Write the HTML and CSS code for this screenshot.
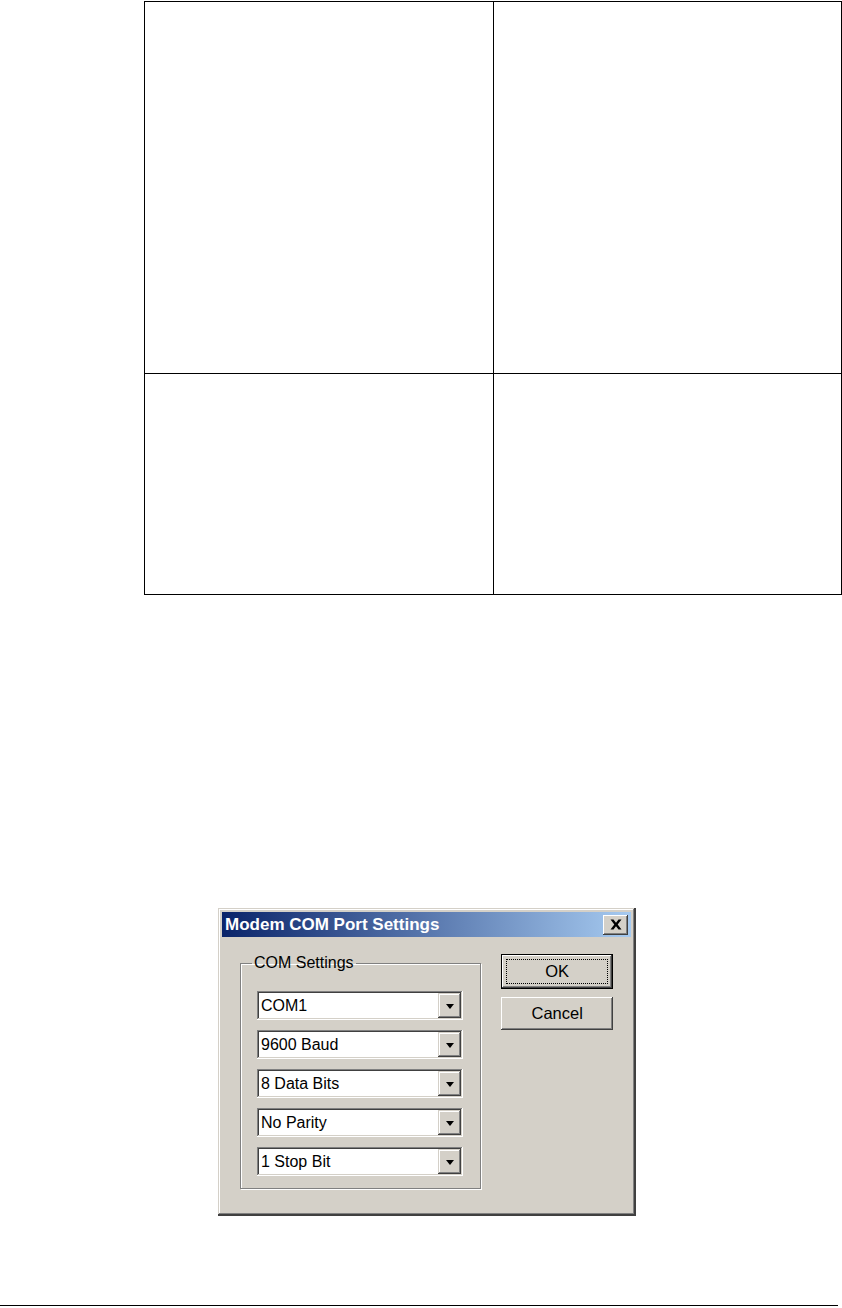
FILE: index.html
```html
<!DOCTYPE html>
<html lang="en">
<head>
    <meta charset="UTF-8">
    <title>Modem COM Port Settings</title>
    <link rel="stylesheet" href="styles.css">
</head>
<body>
    <table class="spec">
        <tr class="spec__row spec__row--tall">
            <td></td>
            <td></td>
        </tr>
        <tr class="spec__row spec__row--short">
            <td></td>
            <td></td>
        </tr>
    </table>

    <div class="dialog">
        <div class="dialog__title">
            <span class="dialog__caption">Modem COM Port Settings</span>
            <span class="title-btn">
                <svg width="12" height="11" viewBox="0 0 12 11">
                    <path d="M0.5 0.5h3l2.5 3.2 2.5-3.2h3L7.7 5.5l3.8 5h-3L6 7.3 3.5 10.5h-3l3.8-5z" fill="#000"/>
                </svg>
            </span>
        </div>

        <div class="dialog__body">
            <fieldset class="group">
                <legend class="group__label">COM Settings</legend>
                <div class="combo"><span class="combo__text">COM1</span><span class="combo__btn"><span class="arrow"></span></span></div>
                <div class="combo"><span class="combo__text">9600 Baud</span><span class="combo__btn"><span class="arrow"></span></span></div>
                <div class="combo"><span class="combo__text">8 Data Bits</span><span class="combo__btn"><span class="arrow"></span></span></div>
                <div class="combo"><span class="combo__text">No Parity</span><span class="combo__btn"><span class="arrow"></span></span></div>
                <div class="combo"><span class="combo__text">1 Stop Bit</span><span class="combo__btn"><span class="arrow"></span></span></div>
            </fieldset>

            <div class="actions">
                <div class="btn btn--default"><span class="btn__focus">OK</span></div>
                <div class="btn">Cancel</div>
            </div>
        </div>
    </div>

    <div class="page-rule"></div>
</body>
</html>
```

FILE: styles.css
```css
*, *::after, *::before {
    margin: 0;
    padding: 0;
    box-sizing: border-box;
}

body {
    width: 842px;
    background-color: #ffffff;
    font-family: "Liberation Sans", Arial, sans-serif;
    color: #000000;
}

/* Empty spec table */
.spec {
    margin: 1px 0 0 144px;
    width: 698px;
    border-collapse: collapse;
}

.spec td {
    width: 50%;
    border: 1px solid #000000;
}

.spec__row--tall td {
    height: 372px;
}

.spec__row--short td {
    height: 221px;
}

/* Classic dialog */
.dialog {
    margin: 313px 0 0 218px;
    width: 418px;
    height: 308px;
    padding: 4px;
    background-color: #d4d0c8;
    box-shadow: inset -1px -1px #404040, inset 1px 1px #d4d0c8,
                inset -2px -2px #808080, inset 2px 2px #ffffff;
    border-right: 1px solid #404040;
    border-bottom: 1px solid #404040;
}

.dialog__title {
    display: flex;
    align-items: center;
    justify-content: space-between;
    height: 25px;
    padding: 0 3px 0 3px;
    background: linear-gradient(to right, #0a246a, #a6caf0);
}

.dialog__caption {
    font-size: 17px;
    font-weight: 700;
    color: #ffffff;
}

.title-btn {
    display: flex;
    align-items: center;
    justify-content: center;
    width: 25px;
    height: 20px;
    background-color: #d4d0c8;
    box-shadow: inset -1px -1px #404040, inset 1px 1px #ffffff,
                inset -2px -2px #808080, inset 2px 2px #d4d0c8;
}

.dialog__body {
    display: flex;
    gap: 20px;
    padding: 17px 18px 0 18px;
}

/* Group box */
.group {
    width: 242px;
    height: 235px;
    padding: 19px 0 0 16px;
    border: 1px solid #808080;
    box-shadow: 1px 1px 0 #ffffff, inset 1px 1px 0 #ffffff;
    display: flex;
    flex-direction: column;
    gap: 10px;
}

.group__label {
    padding: 0 2px;
    margin-left: -5px;
    font-size: 16px;
    line-height: 18px;
    color: #000000;
}

.combo {
    display: flex;
    align-items: center;
    width: 206px;
    height: 29px;
    padding: 2px;
    background-color: #ffffff;
    box-shadow: inset -1px -1px #ffffff, inset 1px 1px #808080,
                inset -2px -2px #d4d0c8, inset 2px 2px #404040;
}

.combo__text {
    flex: 1;
    padding-left: 2px;
    font-size: 16px;
}

.combo__btn {
    display: flex;
    align-items: center;
    justify-content: center;
    width: 23px;
    height: 25px;
    background-color: #d4d0c8;
    box-shadow: inset -1px -1px #404040, inset 1px 1px #d4d0c8,
                inset -2px -2px #808080, inset 2px 2px #ffffff;
}

.arrow {
    width: 0;
    height: 0;
    border-left: 4.5px solid transparent;
    border-right: 4.5px solid transparent;
    border-top: 5px solid #000000;
    margin-top: 1px;
}

/* Buttons */
.actions {
    display: flex;
    flex-direction: column;
    gap: 8px;
    width: 112px;
}

.btn {
    display: flex;
    align-items: center;
    justify-content: center;
    height: 33px;
    font-size: 16.5px;
    background-color: #d4d0c8;
    box-shadow: inset -1px -1px #404040, inset 1px 1px #ffffff,
                inset -2px -2px #808080, inset 2px 2px #d4d0c8;
}

.btn--default {
    height: 35px;
    padding: 4px;
    border: 1px solid #000000;
}

.btn__focus {
    display: flex;
    align-items: center;
    justify-content: center;
    width: 100%;
    height: 100%;
    border: 1px dotted #000000;
}

.page-rule {
    margin-top: 89px;
    width: 838px;
    height: 1px;
    background-color: #000000;
}
```
